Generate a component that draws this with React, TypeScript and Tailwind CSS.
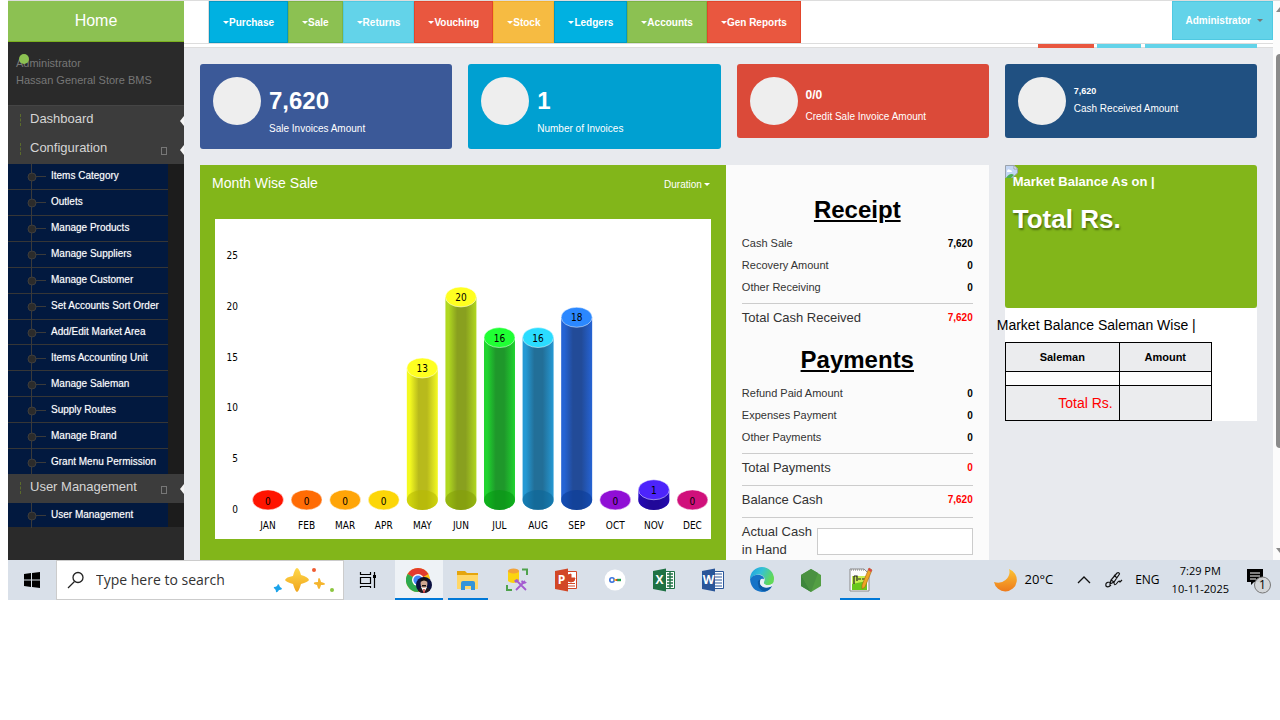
import type { ReactNode } from 'react';

const navItems = [
	{ label: 'Purchase', color: 'bg-[#00b1e1] border-[#0099c6]' },
	{ label: 'Sale', color: 'bg-[#8cc152] border-[#7cb342]' },
	{ label: 'Returns', color: 'bg-[#63d3e9] border-[#4fc9e2]' },
	{ label: 'Vouching', color: 'bg-[#e9573f] border-[#e2452b]' },
	{ label: 'Stock', color: 'bg-[#f6bb42] border-[#f4b02a]' },
	{ label: 'Ledgers', color: 'bg-[#00b1e1] border-[#0099c6]' },
	{ label: 'Accounts', color: 'bg-[#8cc152] border-[#7cb342]' },
	{ label: 'Gen Reports', color: 'bg-[#e9573f] border-[#e2452b]' },
];

const configItems = [
	'Items Category',
	'Outlets',
	'Manage Products',
	'Manage Suppliers',
	'Manage Customer',
	'Set Accounts Sort Order',
	'Add/Edit Market Area',
	'Items Accounting Unit',
	'Manage Saleman',
	'Supply Routes',
	'Manage Brand',
	'Grant Menu Permission',
];

const stats = [
	{ value: '7,620', label: 'Sale Invoices Amount', color: 'bg-[#3b5998]', size: 'text-2xl leading-8 pt-2', height: 'h-[85px]' },
	{ value: '1', label: 'Number of Invoices', color: 'bg-[#00a0d1]', size: 'text-2xl leading-8 pt-2', height: 'h-[85px]' },
	{ value: '0/0', label: 'Credit Sale Invoice Amount', color: 'bg-[#db4a39]', size: 'text-xs leading-5 pt-2', height: 'h-[74px]' },
	{ value: '7,620', label: 'Cash Received Amount', color: 'bg-[#205081]', size: 'text-[9px] leading-3 pt-2', height: 'h-[74px]' },
];

const months = [
	{ name: 'JAN', value: 0, edge: '#ff0f00', mid: '#ff0f00', top: '#ff1400', base: '#ff0f00' },
	{ name: 'FEB', value: 0, edge: '#ff6600', mid: '#ff6600', top: '#ff6c05', base: '#ff6600' },
	{ name: 'MAR', value: 0, edge: '#ff9e01', mid: '#ff9e01', top: '#ffa508', base: '#ff9e01' },
	{ name: 'APR', value: 0, edge: '#fcd202', mid: '#fcd202', top: '#fcd608', base: '#fcd202' },
	{ name: 'MAY', value: 13, edge: '#f4fa20', mid: '#b8ba1c', top: '#ffff20', base: '#b7bb00' },
	{ name: 'JUN', value: 20, edge: '#b0d820', mid: '#89a01f', top: '#ffff20', base: '#83a006' },
	{ name: 'JUL', value: 16, edge: '#20d42f', mid: '#1f982b', top: '#20ff34', base: '#059910' },
	{ name: 'AUG', value: 16, edge: '#2599d4', mid: '#226f98', top: '#2bdcff', base: '#0b6899' },
	{ name: 'SEP', value: 18, edge: '#2563d4', mid: '#224b98', top: '#2b88ff', base: '#0a3c99' },
	{ name: 'OCT', value: 0, edge: '#8a0ccf', mid: '#8a0ccf', top: '#900fd5', base: '#8a0ccf' },
	{ name: 'NOV', value: 1, edge: '#2a0cd0', mid: '#21099a', top: '#4d24fb', base: '#21099a' },
	{ name: 'DEC', value: 0, edge: '#cd0d74', mid: '#cd0d74', top: '#d0107b', base: '#cd0d74' },
];

function Caret({ className = 'border-t-white' }: { className?: string }) {
	return <span className={`inline-block border-x-3 border-t-3 border-x-transparent align-middle ${className}`} />;
}

function MenuHeading({ label, expandable = false }: { label: string; expandable?: boolean }) {
	return (
		<a href="#" className="relative flex h-[29px] items-start bg-[#3c3c3c] pl-3 text-[13px] leading-[25px] text-[#d5d5d5]">
			<span className="mt-2 h-3 w-[10px] border-l border-dashed border-[#5b6b2c]" />
			<span className="flex-1">{label}</span>
			{expandable && <span className="mt-3 mr-[17px] h-2 w-1.5 border border-[#777]" />}
			<span className="absolute top-[10px] right-0 border-y-5 border-r-4 border-y-transparent border-r-[#f4f4f4]" />
		</a>
	);
}

function SubMenu({ items, className }: { items: string[]; className: string }) {
	return (
		<div className="bg-[#1c1c1c] pr-4">
			<ul className={`flex flex-col bg-[#02193f] ${className}`}>
				{items.map(item => (
					<li key={item} className="flex flex-1 items-center border-b border-[#363636] last:border-b-0">
						<a href="#" className="flex items-center text-[10px] leading-4 text-white [text-shadow:0_0_1px_#ffffff80]">
							<svg width="43" height="26" viewBox="0 0 43 26" className="-my-1 shrink-0">
								<path d="M23.5 0V26M24 13.5H38" stroke="#3a3a3a" />
								<circle cx="24" cy="14" r="4" fill="#2b2b2b" stroke="#3d3d3d" />
							</svg>
							{item}
						</a>
					</li>
				))}
			</ul>
		</div>
	);
}

function Sidebar() {
	return (
		<aside className="w-44 shrink-0 bg-[#2a2a2a]">
			<a
				href="#"
				className="flex h-[41px] items-center justify-center border-b border-[#7bb11f] bg-[#8cc152] text-base text-white"
			>
				Home
			</a>
			<div className="relative h-[63px] px-2 pt-[13px] text-[11px] leading-[17px] text-[#777]">
				<p>Administrator</p>
				<p>Hassan General Store BMS</p>
				<span className="absolute top-3 left-[11px] size-2.5 rounded-full bg-[#8cc152]" />
			</div>
			<nav className="border-t border-[#454545]">
				<MenuHeading label="Dashboard" />
				<MenuHeading label="Configuration" expandable />
				<SubMenu items={configItems} className="h-[310px]" />
				<MenuHeading label="User Management" expandable />
				<SubMenu items={['User Management']} className="h-6" />
			</nav>
		</aside>
	);
}

function Header() {
	return (
		<header>
			<div className="flex items-start border-b border-[#ddd] bg-white pl-6">
				<nav className="flex border-l border-[#ddd]">
					{navItems.map(item => (
						<button
							key={item.label}
							type="button"
							className={`flex h-[42px] items-center border px-[13px] text-[10px] font-bold text-white ${item.color}`}
						>
							<Caret />
							{item.label}
						</button>
					))}
				</nav>
				<button
					type="button"
					className="ml-auto flex h-[39px] items-center gap-1.5 border border-[#4fc9e2] bg-[#63d3e9] pr-[9px] pl-3 text-[10px] font-bold text-white"
				>
					Administrator
					<Caret className="border-t-[#777]" />
				</button>
			</div>
			<div className="flex h-1 justify-end border-b border-[#ddd] bg-white pr-4">
				<span className="mr-[3px] h-1 w-14 bg-[#e9573f]" />
				<span className="mr-1 h-1 w-11 bg-[#63d3e9]" />
				<span className="h-1 w-28 bg-[#63d3e9]" />
			</div>
		</header>
	);
}

function SalesChart() {
	const base = 281;
	return (
		<svg viewBox="0 0 496 320" className="block w-full bg-white font-['DejaVu_Sans_Condensed','DejaVu_Sans',sans-serif] text-[10px]">
			{[25, 20, 15, 10, 5, 0].map(tick => (
				<text key={tick} x="23" y={294 - tick * 10.15} textAnchor="end">
					{tick}
				</text>
			))}
			{months.map((month, i) => {
				const x = 53 + i * 38.6;
				const top = base - month.value * 10.15;
				return (
					<g key={month.name}>
						<linearGradient id={`bar-${month.name}`}>
							<stop offset="0" stopColor={month.edge} />
							<stop offset="0.1" stopColor={month.edge} />
							<stop offset="0.38" stopColor={month.mid} />
							<stop offset="0.65" stopColor={month.mid} />
							<stop offset="1" stopColor={month.edge} />
						</linearGradient>
						{month.value > 0 && (
							<>
								<path
									d={`M${x - 15.5} ${top}V${base}A15.5 10 0 0 0 ${x + 15.5} ${base}V${top}Z`}
									fill={`url(#bar-${month.name})`}
								/>
								<ellipse cx={x} cy={base} rx="15.5" ry="10" fill={month.base} opacity="0.6" />
							</>
						)}
						<ellipse cx={x} cy={top} rx="15.5" ry="10" fill={month.top} stroke="#fff" strokeOpacity="0.5" />
						<text x={x} y={month.value > 0 ? top + 4 : base + 5} textAnchor="middle">
							{month.value}
						</text>
						<text x={x} y="310" textAnchor="middle">
							{month.name}
						</text>
					</g>
				);
			})}
		</svg>
	);
}

function Row({ label, value }: { label: string; value: string }) {
	return (
		<div className="flex h-[22px] items-center justify-between text-[11px] text-[#333]">
			<span>{label}</span>
			<b className="text-[10px] text-black">{value}</b>
		</div>
	);
}

function TotalRow({ label, value }: { label: string; value: string }) {
	return (
		<div className="flex h-8 items-center justify-between border-t border-[#ccc] pb-1 text-[13px] text-[#333]">
			<span>{label}</span>
			<b className="text-[10px] text-[#f00]">{value}</b>
		</div>
	);
}

function CashPanel() {
	return (
		<section className="bg-[#fbfbfb] px-4 pt-[27px] pb-px text-[#333]">
			<h2 className="mb-[5px] text-center text-2xl leading-[35px] font-bold text-black underline">Receipt</h2>
			<Row label="Cash Sale" value="7,620" />
			<Row label="Recovery Amount" value="0" />
			<Row label="Other Receiving" value="0" />
			<div className="h-[5px]" />
			<TotalRow label="Total Cash Received" value="7,620" />
			<h2 className="mt-[7px] mb-[5px] text-center text-2xl leading-[35px] font-bold text-black underline">Payments</h2>
			<Row label="Refund Paid Amount" value="0" />
			<Row label="Expenses Payment" value="0" />
			<Row label="Other Payments" value="0" />
			<div className="h-[5px]" />
			<TotalRow label="Total Payments" value="0" />
			<TotalRow label="Balance Cash" value="7,620" />
			<div className="flex items-start gap-1 border-t border-[#ccc] pt-[5px] text-[13px] leading-[18px]">
				<label htmlFor="actual-cash" className="w-[71px] shrink-0">
					Actual Cash in Hand
				</label>
				<input id="actual-cash" className="mt-[5px] h-[27px] min-w-0 flex-1 border border-[#ccc] bg-white px-2" />
			</div>
		</section>
	);
}

function MarketBalance() {
	return (
		<section>
			<div className="relative h-[143px] rounded-[3px] bg-[#82b61a] px-2 pt-2 text-white">
				<svg className="absolute top-0 left-0" width="13" height="13" viewBox="0 0 13 13">
					<path d="M.5 13V.5H9L12.5 4V8L7 13Z" fill="#c3d6f4" stroke="#9aa3ad" />
					<path d="M9 .5V4H12.5Z" fill="#fff" stroke="#9aa3ad" />
					<path d="M2 6Q3 3 5 5Q7 5 7 7H2Z" fill="#fff" />
					<path d="M1 13Q5 7 9 10L6 13Z" fill="#4caf50" />
				</svg>
				<h3 className="relative text-[13px] leading-[17px] font-bold">Market Balance As on |</h3>
				<p className="mt-2 text-[26px] leading-[42px] font-bold [text-shadow:1px_2px_2px_#0006]">Total Rs.</p>
			</div>
			<div className="bg-white">
				<h3 className="-ml-2 text-sm leading-[34px] text-black">Market Balance Saleman Wise |</h3>
				<table className="w-[207px] border-collapse text-black [&_td]:border [&_td]:border-black [&_th]:border [&_th]:border-black">
					<thead>
						<tr className="h-[29px] bg-[#ebecee] text-[11px]">
							<th className="w-[114px]">Saleman</th>
							<th>Amount</th>
						</tr>
					</thead>
					<tbody>
						<tr className="h-[14px] bg-[#fcfcfc]">
							<td className="p-0" />
							<td className="p-0" />
						</tr>
						<tr className="h-[35px] bg-[#ebecee]">
							<td className="pr-1.5 text-right text-sm text-[#f00]">Total Rs.</td>
							<td />
						</tr>
					</tbody>
				</table>
			</div>
		</section>
	);
}

function Dashboard() {
	return (
		<div className="grid grid-cols-4 gap-x-4 px-4 pt-4">
			{stats.map(stat => (
				<div key={stat.label} className="h-[101px]">
					<div className={`flex gap-2 rounded-[3px] p-[13px] text-white ${stat.color} ${stat.height}`}>
						<span className="size-12 shrink-0 rounded-full bg-[#eee]" />
						<div>
							<div className={`font-bold ${stat.size}`}>{stat.value}</div>
							<div className="pt-1 text-[10px] leading-4">{stat.label}</div>
						</div>
					</div>
				</div>
			))}
			<div className="col-span-3 grid grid-cols-3">
				<section className="col-span-2 bg-[#82b61a] px-[15px] pb-5">
					<div className="-ml-[3px] flex h-[54px] items-start justify-between pt-2">
						<h3 className="text-sm text-white">Month Wise Sale</h3>
						<button type="button" className="flex h-[22px] items-center gap-0.5 pr-px text-[10px] text-white">
							Duration
							<Caret />
						</button>
					</div>
					<SalesChart />
				</section>
				<CashPanel />
			</div>
			<MarketBalance />
		</div>
	);
}

function Scrollbar() {
	return (
		<div className="flex w-[7px] shrink-0 flex-col items-end overflow-hidden bg-[#fcfcfc]">
			<svg width="4" height="53" viewBox="0 0 4 53">
				<path d="M0 11L4 6V11Z" fill="#8b8b8b" />
			</svg>
			<span className="h-[394px] w-1 rounded-l bg-[#8b8b8b]" />
			<svg width="4" height="5" viewBox="0 0 4 5" className="mt-auto mb-[7px]">
				<path d="M0 0H4V5Z" fill="#8b8b8b" />
			</svg>
		</div>
	);
}

function TaskButton({ label, state = 'idle', children }: { label: string; state?: 'idle' | 'open' | 'active'; children: ReactNode }) {
	return (
		<button
			type="button"
			aria-label={label}
			className={`relative flex h-10 w-12 items-center justify-center ${state === 'active' ? 'bg-[#eef2f6]' : ''}`}
		>
			<svg width="26" height="26" viewBox="0 0 26 26">
				{children}
			</svg>
			{state === 'active' && <span className="absolute inset-x-0 bottom-0 h-0.5 bg-[#0078d7]" />}
			{state === 'open' && <span className="absolute inset-x-1 bottom-0 h-0.5 bg-[#0078d7]" />}
		</button>
	);
}

function OfficeIcon({ letter, color, children }: { letter: string; color: string; children: ReactNode }) {
	return (
		<>
			<path d="M13 4.5H23.5V21.5H13Z" fill="#fff" stroke={color} />
			{children}
			<path d="M2 4L15 1.5V24.5L2 22Z" fill={color} />
			<text x="8.5" y="17" textAnchor="middle" fill="#fff" fontSize="12" fontWeight="bold">
				{letter}
			</text>
		</>
	);
}

function Taskbar() {
	return (
		<footer className="flex h-10 items-center bg-[#d9e0e9] font-['Open_Sans','Noto_Sans',sans-serif] text-black">
			<button type="button" aria-label="Start" className="flex h-10 w-12 items-center justify-center">
				<svg width="16" height="16" viewBox="0 0 16 16">
					<path d="M0 2L7 1V7.5H0ZM8 1L16 0V7.5H8ZM0 8.5H7V15L0 14ZM8 8.5H16V16L8 15Z" />
				</svg>
			</button>
			<label className="flex h-10 w-72 items-center border border-[#ccc] bg-white pl-2.5">
				<svg width="18" height="18" viewBox="0 0 18 18" fill="none" stroke="#222" strokeWidth="1.3">
					<circle cx="11" cy="6.5" r="5" />
					<path d="M7.5 10.5L1 17" />
				</svg>
				<input
					aria-label="Search"
					placeholder="Type here to search"
					className="ml-[11px] min-w-0 flex-1 text-sm outline-none placeholder:text-[#333]"
				/>
				<svg width="62" height="28" viewBox="0 0 62 28" className="mr-2">
					<defs>
						<linearGradient id="spark" x1="0" y1="0" x2="0" y2="1">
							<stop offset="0" stopColor="#ffd84a" />
							<stop offset="1" stopColor="#f0a51c" />
						</linearGradient>
					</defs>
					<path d="M24 2Q26 2 28 9Q35 11 36 14Q35 16 28 18Q26 25 24 26Q22 25 20 18Q13 16 12 14Q13 11 20 10Q22 2 24 2Z" fill="url(#spark)" />
					<path d="M46 12Q47 12 48 16Q52 17 52 18Q52 19 48 19Q47 23 46 23Q45 23 44 19Q40 18 41 17Q41 16 45 16Q45 12 46 12Z" fill="#f5b52e" />
					<path d="M5 18Q6 18 7 21Q9 22 9 23Q8 24 6 24Q4 27 3 26Q3 24 2 23Q0 22 1 21Q3 21 4 20Z" fill="#1aa3ea" />
					<circle cx="41" cy="4" r="2" fill="#ef5b32" />
					<circle cx="59" cy="24" r="2" fill="#8cc63f" />
				</svg>
			</label>
			<button type="button" aria-label="Task View" className="mr-[3px] flex h-10 w-12 items-center justify-center">
				<svg width="18" height="18" viewBox="0 0 18 18" fill="none" stroke="#000" strokeWidth="1.2">
					<path d="M1.5 1V3.5H11.5V1M1.5 6.5H11.5V12.5H1.5ZM1.5 17V15.5H11.5V17M15.5 1V17" />
					<path d="M14 4H17V7H14Z" fill="#000" stroke="none" />
				</svg>
			</button>
			<div className="flex gap-px">
				<TaskButton label="Chrome" state="active">
					<circle cx="12" cy="13" r="12" fill="#fbc116" />
					<path d="M12 13L1.6 7A12 12 0 0 1 22.4 7Z" fill="#e33b2e" />
					<path d="M1.6 7A12 12 0 0 0 12 25L17 16L12 13Z" fill="#2da94f" />
					<circle cx="12" cy="13" r="6" fill="#fff" />
					<circle cx="12" cy="13" r="4.6" fill="#4285f4" />
					<circle cx="18" cy="18" r="8" fill="#0b1040" />
					<path d="M12 24Q13 20 18 20Q23 20 24 23Q21 26 18 26Q14 26 12 24Z" fill="#221a20" />
					<path d="M15 20L18 26L21 20Z" fill="#fff" />
					<path d="M18 22V26" stroke="#c22" strokeWidth="1.4" />
					<ellipse cx="18" cy="16.5" rx="3.4" ry="4.5" fill="#d0a690" />
					<path d="M14.5 15Q14 10.500 18 10.500Q22 10.500 21.500 15Q18 12 14.500 15ZM16 18H20V19.500H16Z" fill="#161010" />
				</TaskButton>
				<TaskButton label="File Explorer" state="open">
					<path d="M2 4H10L12 6H23V12H2Z" fill="#e5a50d" />
					<path d="M2 8H23V22H2Z" fill="#ffd767" />
					<path d="M6 23V16Q6 14 8 14H18Q20 14 20 16V23H16V19H10V23Z" fill="#3394d8" />
				</TaskButton>
				<TaskButton label="Database Tools">
					<path d="M4 4V14Q9 18 15 14V4Z" fill="#fbd410" />
					<ellipse cx="9.5" cy="4" rx="5.5" ry="2.5" fill="#f2a33a" />
					<path d="M18 2.500H23V8M3 18V23H8" fill="none" stroke="#4ea24c" strokeWidth="2" />
					<path d="M12 13L22 23M21 14L12 23" stroke="#a45bd0" strokeWidth="1.8" />
					<path d="M10 14Q12 11 15 13L12 16ZM18 13L20 15H23Q22 17 19 17L17 15Z" fill="#a45bd0" />
				</TaskButton>
				<TaskButton label="PowerPoint">
					<OfficeIcon letter="P" color="#d24726">
						<path d="M18 7V11H22A4 4 0 1 1 18 7ZM15 16.500H22M15 19H22" fill="#d24726" stroke="#d24726" />
					</OfficeIcon>
				</TaskButton>
				<TaskButton label="Remote Access">
					<circle cx="13" cy="13" r="10.5" fill="#fff" />
					<circle cx="10" cy="13" r="2.2" fill="none" stroke="#3b72dc" strokeWidth="1.6" />
					<path d="M12 13H15" stroke="#f5b514" strokeWidth="1.6" />
					<path d="M15 13H19" stroke="#1e9e50" strokeWidth="2.4" />
					<path d="M14.500 12V14" stroke="#e23b2e" strokeWidth="1.4" />
				</TaskButton>
				<TaskButton label="Excel">
					<OfficeIcon letter="X" color="#1f7244">
						<path d="M16 7H22M16 10H22M16 13H22M16 16H22M16 19H22M19 5V21" fill="none" stroke="#1f7244" strokeWidth="1.4" />
					</OfficeIcon>
				</TaskButton>
				<TaskButton label="Word">
					<OfficeIcon letter="W" color="#2a5699">
						<path d="M15 7H22M15 10H22M15 13H22M15 16H22M15 19H22" fill="none" stroke="#2a5699" strokeWidth="1.2" />
					</OfficeIcon>
				</TaskButton>
				<TaskButton label="Edge">
					<defs>
						<linearGradient id="edge-top" x1="0" y1="0" x2="1" y2="0.4">
							<stop offset="0" stopColor="#1b9de2" />
							<stop offset="0.5" stopColor="#35c1d5" />
							<stop offset="1" stopColor="#62d957" />
						</linearGradient>
					</defs>
					<path d="M1 12A12 12 0 0 1 25 12Q25 18 19 18Q14 18 15 15Q17 12 14 9Q8 5 1 12Z" fill="url(#edge-top)" />
					<path d="M1 12Q5 7 11 8Q15 9 15 12Q10 11 9 16Q10 23 17 22Q21 21 23 19Q20 25 13 25Q2 24 1 12Z" fill="#1673c7" />
					<path d="M9 14Q8 21 14 24Q20 25 23 19Q18 22 14 20Q9 17 12 12Q10 12 9 14Z" fill="#0c59a4" />
					<path d="M12 12Q9 18 15 20Q20 21 23 19Q24 18 23 17Q20 19 17 18Q14 17 15 14Q15 12 12 12Z" fill="#eaf0f6" />
				</TaskButton>
				<TaskButton label="Node">
					<path d="M13 2L23 8V19L13 25L3 19V8Z" fill="#539e43" />
					<path d="M3 8L13 25L3 19Z" fill="#3e863d" />
					<path d="M13 2L3 8L13 25L20 6Z" fill="#4a9141" />
				</TaskButton>
				<TaskButton label="Notepad++" state="open">
					<path d="M3 2H17L22 7V24H3Z" fill="#fdfdfd" stroke="#8a8a8a" />
					<path d="M5 9H20V23H5Z" fill="#c8ee52" />
					<path d="M5 17L20 14V23H5Z" fill="#69c71d" />
					<path d="M7 9V17M7 9H10V14M11 12H14M15 12H18" stroke="#222" strokeWidth="1.2" fill="none" />
					<path d="M4 3H17" stroke="#777" strokeDasharray="1 1" />
					<path d="M22 1L25 3L18 20L15 22V18Z" fill="#f0a426" stroke="#a36a12" strokeWidth="0.6" />
					<path d="M22 1L25 3L24 5L21 3Z" fill="#d9444e" />
				</TaskButton>
			</div>
			<div className="ml-auto flex items-center">
				<svg width="24" height="24" viewBox="0 0 24 24">
					<defs>
						<linearGradient id="moon" x1="0" y1="0" x2="0" y2="1">
							<stop offset="0" stopColor="#fbc334" />
							<stop offset="1" stopColor="#ee7a1b" />
						</linearGradient>
					</defs>
					<path d="M16 1A11.500 11.500 0 1 1 1 14Q8 16 12.500 12Q18 7 16 1Z" fill="url(#moon)" />
				</svg>
				<span className="ml-2 text-[13px]">20°C</span>
				<svg width="14" height="14" viewBox="0 0 14 14" className="ml-6" fill="none" stroke="#111" strokeWidth="1.3">
					<path d="M1 10L7 4L13 10" />
				</svg>
				<svg width="18" height="18" viewBox="0 0 18 18" className="ml-3.5" fill="none" stroke="#111" strokeWidth="1.2">
					<path d="M5 13L6 9L12 2Q14 1 14.500 3L9 11L5 13ZM6 9L9 11M9 4L12 7M5 11Q0 11 1 15Q3 17 6 14M9 11Q9 16 12 12Q14 9 15 11L17 9" />
				</svg>
				<span className="ml-3 text-xs">ENG</span>
				<span className="ml-3 text-center text-[11px] leading-[18px]">
					7:29 PM
					<br />
					10-11-2025
				</span>
				<svg width="26" height="26" viewBox="0 0 26 26" className="mt-1 mr-2 ml-[17px]">
					<path d="M1 0H17V13H8L5 16V13H1Z" />
					<path d="M4 4H14M4 7H14M4 10H10" stroke="#fff" />
					<circle cx="16.5" cy="16" r="8" fill="#d3d5d8" fillOpacity="0.95" stroke="#777" />
					<text x="16.5" y="20" textAnchor="middle" fontSize="12">
						1
					</text>
				</svg>
			</div>
		</footer>
	);
}

export default function App() {
	return (
		<div className="min-h-screen bg-white pl-2 font-['Liberation_Sans',Arial,sans-serif]">
			<div className="flex border-t border-[#ddd]">
				<Sidebar />
				<main className="min-w-0 flex-1 bg-[#e8eaee]">
					<Header />
					<Dashboard />
				</main>
				<Scrollbar />
			</div>
			<Taskbar />
		</div>
	);
}
